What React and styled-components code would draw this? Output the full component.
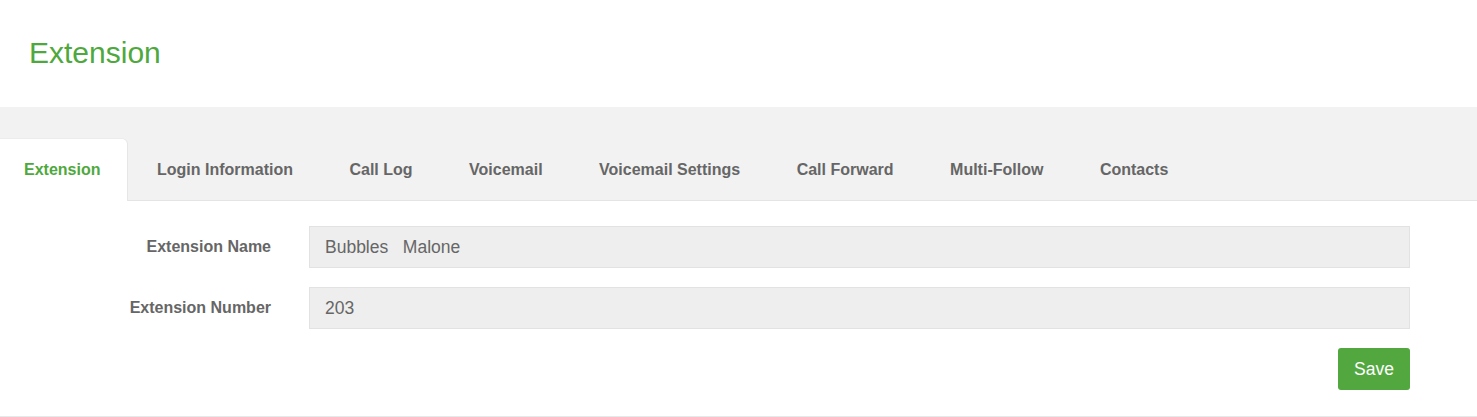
import styled, { createGlobalStyle } from 'styled-components';

const GlobalStyle = createGlobalStyle`
  body {
    margin: 0;
    background: #fff;
    font-family: "Liberation Sans", Arial, sans-serif;
  }
`;

const tabs = [
  'Extension',
  'Login Information',
  'Call Log',
  'Voicemail',
  'Voicemail Settings',
  'Call Forward',
  'Multi-Follow',
  'Contacts',
];

const fields = [
  { label: 'Extension Name', value: 'Bubbles\u00a0\u00a0 Malone' },
  { label: 'Extension Number', value: '203' },
];

export default () => (
  <Page>
    <GlobalStyle />
    <Header>
      <Title>Extension</Title>
    </Header>
    <TabBand>
      <TabList>
        {tabs.map((t, i) => (
          <Tab key={t} active={i === 0} first={i === 0}>
            {t}
          </Tab>
        ))}
      </TabList>
    </TabBand>
    <Form>
      {fields.map((f) => (
        <Row key={f.label}>
          <Label>{f.label}</Label>
          <Input>{f.value}</Input>
        </Row>
      ))}
      <Actions>
        <SaveButton>Save</SaveButton>
      </Actions>
    </Form>
  </Page>
);

const Page = styled.div`
  width: 100%;
`;

const Header = styled.div`
  height: 107px;
  box-sizing: border-box;
  padding: 36px 0 0 29px;
`;

const Title = styled.h1`
  margin: 0;
  font-size: 30px;
  line-height: 33px;
  font-weight: 400;
  color: #4ea83d;
`;

const TabBand = styled.div`
  background: #f2f2f2;
  padding-top: 32px;
`;

const TabList = styled.div`
  display: flex;
  border-bottom: 1px solid #e4e4e4;
`;

const Tab = styled.div`
  height: 62px;
  margin-bottom: -1px;
  display: flex;
  align-items: center;
  box-sizing: border-box;
  padding: 0 26.5px 0 ${(p) => (p.first ? '24px' : '30px')};
  font-size: 16px;
  font-weight: 700;
  color: ${(p) => (p.active ? '#4ea83d' : '#666')};
  background: ${(p) => (p.active ? '#fff' : 'transparent')};
  border-top-right-radius: ${(p) => (p.active ? '5px' : '0')};
  box-shadow: ${(p) => (p.active ? '1px 0 0 #e6e6e6, 0 -1px 0 #ececec' : 'none')};
`;

const Form = styled.div`
  padding: 25px 67px 26px 0;
  border-bottom: 1px solid #e8e8e8;
  display: flex;
  flex-direction: column;
  gap: 19px;
`;

const Row = styled.div`
  display: grid;
  grid-template-columns: 271px 1fr;
  column-gap: 38px;
  align-items: center;
`;

const Label = styled.div`
  text-align: right;
  font-size: 16px;
  font-weight: 700;
  color: #666;
`;

const Input = styled.div`
  height: 42px;
  box-sizing: border-box;
  display: flex;
  align-items: center;
  padding: 0 15px;
  background: #eeeeee;
  border: 1px solid #e2e2e2;
  font-size: 17.5px;
  color: #666;
`;

const Actions = styled.div`
  display: flex;
  justify-content: flex-end;
`;

const SaveButton = styled.button`
  width: 72px;
  height: 42px;
  border: none;
  border-radius: 3px;
  background: #52a83f;
  color: #fff;
  font-family: "Liberation Sans", Arial, sans-serif;
  font-size: 17.5px;
  cursor: pointer;
`;
